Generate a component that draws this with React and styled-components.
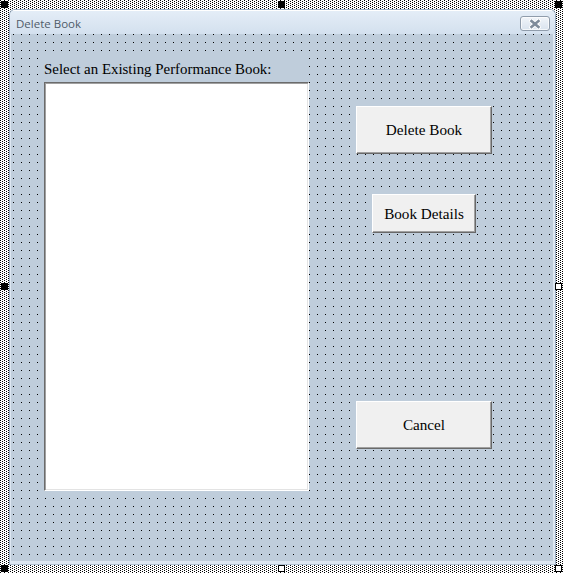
import React from "react";
import styled, {createGlobalStyle} from "styled-components";

const GlobalStyle = createGlobalStyle`
  html, body {
    margin: 0;
    padding: 0;
    background: #ffffff;
  }
`;

// designer selection frame (hatched border round the form)
const Frame = styled.div`
  position: relative;
  box-sizing: border-box;
  width: 563px;
  height: 573px;
  padding: 9px 7px 8px 9px;
  background-color: #ffffff;
  background-image: conic-gradient(from 270deg at 1px 1px, #000 25%, transparent 0),
    conic-gradient(from 270deg at 1px 1px, #000 25%, transparent 0);
  background-size: 4px 2px, 4px 2px;
  background-position: 0 0, 2px 1px;
`;

const Handle = styled.div`
  position: absolute;
  box-sizing: border-box;
  width: 7px;
  height: 7px;
  left: ${(p) => p.x}px;
  top: ${(p) => p.y}px;
  background: ${(p) => (p.open ? "#ffffff" : "#000000")};
  border: 1px solid #000;
`;

const Window = styled.div`
  box-sizing: border-box;
  height: 100%;
  display: flex;
  flex-direction: column;
  background: #dde7f2;
  border: 1px solid #9aadc2;
  border-bottom-color: #aebfd0;
  border-radius: 6px 6px 0 0;
  overflow: hidden;
`;

const TitleBar = styled.div`
  height: 24px;
  flex: none;
  display: flex;
  align-items: center;
  justify-content: space-between;
  padding: 0 5px 0 6px;
  background: linear-gradient(#e4edf7, #d3e0ee);
  border-top: 1px solid #ffffff;
  box-sizing: border-box;
`;

const Title = styled.span`
  font-family: "Open Sans", "Noto Sans", sans-serif;
  font-size: 11.5px;
  color: #4f5b69;
  padding-top: 1px;
`;

const CloseBtn = styled.div`
  width: 30px;
  height: 15px;
  box-sizing: border-box;
  margin-top: 2px;
  border: 1px solid #8f9cab;
  border-radius: 3px;
  background: linear-gradient(#f1f5fa, #d9e3ee);
  box-shadow: inset 0 0 0 1px rgba(255, 255, 255, 0.7);
  display: flex;
  align-items: center;
  justify-content: center;
`;

const Body = styled.div`
  flex: 1;
  margin: 0 2px 3px 1px;
  display: flex;
  gap: 47px;
  padding: 24px 0 0 33px;
  background-color: #bfcddb;
  background-image: conic-gradient(from 270deg at 1px 1px, #000 25%, transparent 0);
  background-size: 8px 8px;
  background-position: 2px 0;
`;

const LeftCol = styled.div`
  display: flex;
  flex-direction: column;
`;

// label control is opaque, so the grid dots stop behind it
const Label = styled.div`
  box-sizing: border-box;
  height: 24px;
  width: 271px;
  margin-left: -6px;
  padding: 2px 0 0 6px;
  line-height: 18px;
  background: #bfcddb;
  font-family: "Liberation Serif", "Times New Roman", serif;
  font-size: 14.9px;
  color: #000;
  white-space: nowrap;
`;

const ListBox = styled.div`
  box-sizing: border-box;
  width: 265px;
  height: 409px;
  background: #ffffff;
  border-style: solid;
  border-width: 1px;
  border-color: #6b6b6b #ffffff #ffffff #6b6b6b;
  box-shadow: inset 1px 1px 0 #a0a0a0, inset -1px -1px 0 #e3e3e3;
`;

const RightCol = styled.div`
  width: 136px;
  display: flex;
  flex-direction: column;
  align-items: center;
`;

const Button = styled.div`
  box-sizing: border-box;
  width: ${(p) => p.w}px;
  height: ${(p) => p.h}px;
  margin-top: ${(p) => p.top}px;
  display: flex;
  align-items: center;
  justify-content: center;
  background: #f0f0f0;
  border-style: solid;
  border-width: 1px;
  border-color: #ffffff #696969 #696969 #ffffff;
  box-shadow: inset -1px -1px 0 #a0a0a0;
  font-family: "Liberation Serif", "Times New Roman", serif;
  font-size: 15.2px;
  color: #000;
`;

function CloseGlyph() {
  return (
    <svg width="12" height="10" viewBox="0 0 12 10">
      <path d="M2.5 2 L9.5 8 M9.5 2 L2.5 8" stroke="#ffffff" strokeWidth="4.5" strokeLinecap="square" />
      <path d="M2.5 2 L9.5 8 M9.5 2 L2.5 8" stroke="#7f8c9b" strokeWidth="2.6" strokeLinecap="square" />
    </svg>
  );
}

export default function App() {
  return (
    <>
      <GlobalStyle />
      <Frame>
        <Window>
          <TitleBar>
            <Title>Delete Book</Title>
            <CloseBtn>
              <CloseGlyph />
            </CloseBtn>
          </TitleBar>
          <Body>
            <LeftCol>
              <Label>Select an Existing Performance Book:</Label>
              <ListBox />
            </LeftCol>
            <RightCol>
              <Button w={136} h={48} top={48}>Delete Book</Button>
              <Button w={104} h={39} top={40}>Book Details</Button>
              <Button w={136} h={48} top={168}>Cancel</Button>
            </RightCol>
          </Body>
        </Window>
        <Handle x={1} y={1} />
        <Handle x={278} y={1} />
        <Handle x={555} y={1} />
        <Handle x={1} y={283} />
        <Handle x={555} y={283} open />
        <Handle x={1} y={565} />
        <Handle x={278} y={565} open />
        <Handle x={555} y={565} open />
      </Frame>
    </>
  );
}
